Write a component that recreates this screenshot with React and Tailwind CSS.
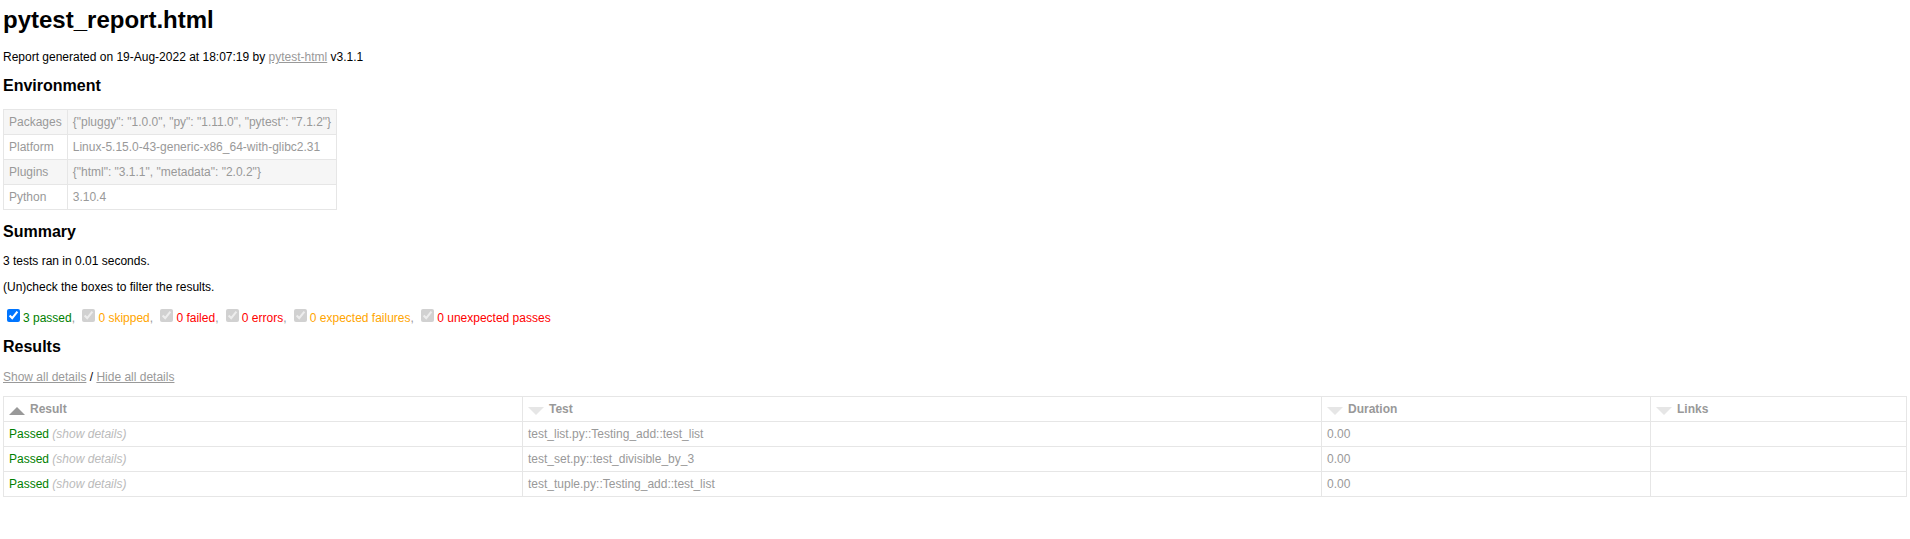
import React from 'react';

const environment = [
	[ 'Packages', '{"pluggy": "1.0.0", "py": "1.11.0", "pytest": "7.1.2"}' ],
	[ 'Platform', 'Linux-5.15.0-43-generic-x86_64-with-glibc2.31' ],
	[ 'Plugins', '{"html": "3.1.1", "metadata": "2.0.2"}' ],
	[ 'Python', '3.10.4' ],
];

const filters = [
	{ label: '3 passed', color: 'text-[#008000]', enabled: true },
	{ label: '0 skipped', color: 'text-[#ffa500]' },
	{ label: '0 failed', color: 'text-[#ff0000]' },
	{ label: '0 errors', color: 'text-[#ff0000]' },
	{ label: '0 expected failures', color: 'text-[#ffa500]' },
	{ label: '0 unexpected passes', color: 'text-[#ff0000]', last: true },
];

const tests = [
	'test_list.py::Testing_add::test_list',
	'test_set.py::test_divisible_by_3',
	'test_tuple.py::Testing_add::test_list',
];

const SortIcon = ( { active } ) =>
	active ? (
		<div className="float-left mr-[5px] mt-[5px] w-0 h-0 border-x-8 border-x-transparent border-b-8 border-b-[#999]" />
	) : (
		<div className="float-left mr-[5px] mt-[5px] w-0 h-0 border-x-8 border-x-transparent border-t-8 border-t-[#e6e6e6]" />
	);

const App = () => {
	return (
		<div className="min-h-screen bg-white px-[3px] font-['Liberation_Sans',Arial,sans-serif] text-[12px] leading-[normal] text-[#999] flow-root">
			<h1 className="mt-[6px] mb-4 text-[24px] font-bold text-black">
				pytest_report.html
			</h1>
			<p className="my-3 text-black">
				Report generated on 19-Aug-2022 at 18:07:19 by{ ' ' }
				<a href="#" className="text-[#999] underline">
					pytest-html
				</a>{ ' ' }
				v3.1.1
			</p>

			<h2 className="my-[13.28px] text-[16px] font-bold text-black">
				Environment
			</h2>
			<table className="border-collapse">
				<tbody>
					{ environment.map( ( [ key, value ], index ) => (
						<tr
							key={ key }
							className={ index % 2 === 0 ? 'bg-[#f6f6f6]' : '' }
						>
							<td className="p-[5px] border border-[#e6e6e6]">{ key }</td>
							<td className="p-[5px] border border-[#e6e6e6]">{ value }</td>
						</tr>
					) ) }
				</tbody>
			</table>

			<h2 className="my-[13.28px] text-[16px] font-bold text-black">
				Summary
			</h2>
			<p className="my-3 text-black">3 tests ran in 0.01 seconds. </p>
			<p className="my-3 text-black">
				(Un)check the boxes to filter the results.
			</p>
			<div>
				{ filters.map( ( { label, color, enabled, last } ) => (
					<React.Fragment key={ label }>
						<input
							type="checkbox"
							defaultChecked
							disabled={ ! enabled }
							className="mt-[3px] mr-[3px] mb-[3px] ml-[4px]"
						/>
						<span className={ color }>{ label }</span>
						{ ! last && ', ' }
					</React.Fragment>
				) ) }
			</div>

			<h2 className="my-[13.28px] text-[16px] font-bold text-black">
				Results
			</h2>
			<p className="my-3 text-black">
				<a href="#" className="text-[#999] underline">
					Show all details
				</a>
				{ ' / ' }
				<a href="#" className="text-[#999] underline">
					Hide all details
				</a>
			</p>
			<table className="w-full table-fixed border-collapse border border-[#e6e6e6] text-left">
				<colgroup>
					<col className="w-[519px]" />
					<col className="w-[799px]" />
					<col className="w-[329px]" />
					<col />
				</colgroup>
				<thead>
					<tr>
						<th className="p-[5px] border border-[#e6e6e6] font-bold">
							<SortIcon active />
							Result
						</th>
						<th className="p-[5px] border border-[#e6e6e6] font-bold">
							<SortIcon />
							Test
						</th>
						<th className="p-[5px] border border-[#e6e6e6] font-bold">
							<SortIcon />
							Duration
						</th>
						<th className="p-[5px] border border-[#e6e6e6] font-bold">
							<SortIcon />
							Links
						</th>
					</tr>
				</thead>
				<tbody>
					{ tests.map( ( name ) => (
						<tr key={ name }>
							<td className="p-[5px] border border-[#e6e6e6] text-[#008000]">
								Passed
								<span className="italic text-[#bbb]"> (show details)</span>
							</td>
							<td className="p-[5px] border border-[#e6e6e6]">{ name }</td>
							<td className="p-[5px] border border-[#e6e6e6]">0.00</td>
							<td className="p-[5px] border border-[#e6e6e6]"></td>
						</tr>
					) ) }
				</tbody>
			</table>
		</div>
	);
};

export default App;
